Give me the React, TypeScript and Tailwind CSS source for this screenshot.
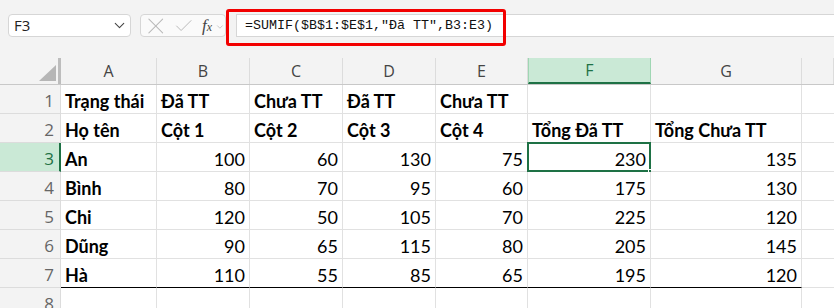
import { ChevronDown, X, Check } from 'lucide-react';

const COLS = ['A', 'B', 'C', 'D', 'E', 'F', 'G', ''];

type Cell = { v: string; bold?: boolean; num?: boolean };

const ROWS: Cell[][] = [
  [
    { v: 'Trạng thái', bold: true },
    { v: 'Đã TT', bold: true },
    { v: 'Chưa TT', bold: true },
    { v: 'Đã TT', bold: true },
    { v: 'Chưa TT', bold: true },
    { v: '' },
    { v: '' },
  ],
  [
    { v: 'Họ tên', bold: true },
    { v: 'Cột 1', bold: true },
    { v: 'Cột 2', bold: true },
    { v: 'Cột 3', bold: true },
    { v: 'Cột 4', bold: true },
    { v: 'Tổng Đã TT', bold: true },
    { v: 'Tổng Chưa TT', bold: true },
  ],
  ...[
    ['An', '100', '60', '130', '75', '230', '135'],
    ['Bình', '80', '70', '95', '60', '175', '130'],
    ['Chi', '120', '50', '105', '70', '225', '120'],
    ['Dũng', '90', '65', '115', '80', '205', '145'],
    ['Hà', '110', '55', '85', '65', '195', '120'],
  ].map((r) => r.map((v, i) => (i === 0 ? { v, bold: true } : { v, num: true }))),
  [{ v: '' }, { v: '' }, { v: '' }, { v: '' }, { v: '' }, { v: '' }, { v: '' }],
];

const GRID = 'grid grid-cols-[61px_96px_93px_93px_93px_92px_123px_151px_1fr]';

export default function App() {
  return (
    <div className="h-[308px] w-[834px] overflow-hidden bg-[#f3f3f3] font-['Open_Sans',sans-serif]">
      {/* Formula bar */}
      <div className="relative flex h-[58px] items-start pt-[14px]">
        <div className="ml-[8px] flex h-[23px] w-[123px] items-center justify-between rounded-[4px] border border-[#d6d6d6] bg-white pl-[5px] pr-[2px] text-[15px] text-[#222]">
          <span>F3</span>
          <ChevronDown size={17} strokeWidth={1.5} className="text-[#444]" />
        </div>
        <div className="ml-[9px] flex h-[23px] w-[86px] items-center rounded-[4px] border border-[#d6d6d6] bg-[#fafafa] pl-[1px]">
          <X size={28} strokeWidth={0.9} className="text-[#b8b8b8]" />
          <Check size={22} strokeWidth={1.1} className="ml-[3px] text-[#b8b8b8]" />
          <span className="ml-[8px] font-['Liberation_Serif',serif] text-[17px] italic leading-none text-[#444]">
            f<span className="text-[12px]">x</span>
          </span>
          <ChevronDown size={10} strokeWidth={1.5} className="ml-[3px] mt-[2px] text-[#aaa]" />
        </div>
        <div className="ml-[10px] flex h-[23px] flex-1 items-center border-y border-l border-[#d6d6d6] bg-white pl-[8px] font-['Liberation_Mono',monospace] text-[13.33px] text-[#111]">
          =SUMIF($B$1:$E$1,"Đã TT",B3:E3)
        </div>
        <div className="absolute left-[226px] top-[9px] h-[37px] w-[280px] rounded-[3px] border-[3px] border-[#f20000]" />
      </div>

      {/* Column headers */}
      <div className={`${GRID} h-[27px] border-b border-[#c8c8c8] bg-[#f3f3f3]`}>
        <div className="relative border-r-[3px] border-[#bdbdbd]">
          <div className="absolute bottom-[3px] right-[2px] h-0 w-0 border-b-[16px] border-l-[17px] border-b-[#b6b6b6] border-l-transparent" />
        </div>
        {COLS.map((c, i) => (
          <div
            key={i}
            className={
              c === 'F'
                ? 'flex items-center justify-center border-x border-b-2 border-x-[#9fd6b3] border-b-[#1e7145] bg-[#cae9d6] text-[16px] text-[#1e7145]'
                : 'flex items-center justify-center border-r border-[#dcdcdc] text-[16px] text-[#444]'
            }
          >
            {c}
          </div>
        ))}
      </div>

      {/* Rows */}
      {ROWS.map((row, r) => {
        const sel = r === 2;
        return (
          <div key={r} className={`${GRID} h-[29px]`}>
            <div
              className={
                sel
                  ? 'flex items-end justify-end border-b border-r-2 border-b-[#dcdcdc] border-r-[#1e7145] bg-[#cae9d6] pb-[4px] pr-[5px] text-[17px] leading-none text-[#1e7145]'
                  : 'flex items-end justify-end border-b border-r border-[#dcdcdc] bg-[#f3f3f3] pb-[4px] pr-[6px] text-[17px] leading-none text-[#666]'
              }
            >
              <span>{r + 1}</span>
            </div>
            {row.map((cell, c) => (
              <div
                key={c}
                className={`relative flex items-end bg-white px-[4px] pb-[3px] font-['Lato',sans-serif] text-[18px] leading-none text-black ${
                  cell.num ? 'justify-end' : 'justify-start'
                } ${cell.bold ? 'font-bold' : 'font-normal'} border-r border-[#e1e1e1] ${
                  r === 6 ? 'border-b border-b-black' : 'border-b border-b-[#e1e1e1]'
                }`}
              >
                {cell.v}
                {sel && c === 5 && (
                  <>
                    <div className="absolute inset-[-1px] border-2 border-[#1e7145]" />
                    <div className="absolute bottom-[-4px] right-[-4px] h-[6px] w-[6px] border border-white bg-[#1e7145]" />
                  </>
                )}
              </div>
            ))}
            <div className="border-b border-[#e1e1e1] bg-white" />
          </div>
        );
      })}
    </div>
  );
}
